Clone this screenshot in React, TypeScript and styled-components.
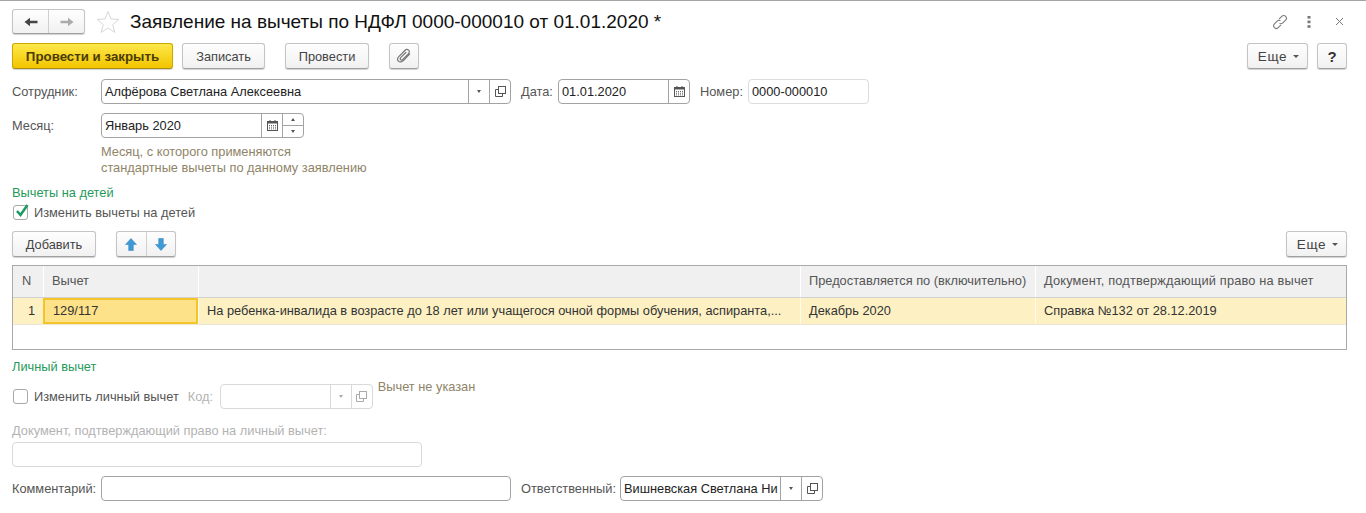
import { FC, ReactNode } from 'react';
import styled, { createGlobalStyle, css } from 'styled-components';

const Global = createGlobalStyle`
  html, body {
    margin: 0;
    padding: 0;
    background: #fff;
    overflow: hidden;
  }
  body {
    font-family: "Liberation Sans", Arial, sans-serif;
    font-size: 12.8px;
    color: #333;
  }
`;

const Page = styled.div`
  width: 1366px;
  height: 513px;
  box-sizing: border-box;
  border-top: 1px solid #a5a5a5;
  padding: 8px 19px 0 12px;
`;

const Row = styled.div<{ $h?: number; $mt?: number }>`
  display: flex;
  align-items: center;
  height: ${(p) => p.$h ?? 25}px;
  margin-top: ${(p) => p.$mt ?? 0}px;
`;

const Spacer = styled.div`
  flex: 1;
`;

const Title = styled.h1`
  margin: 0 0 0 10px;
  font-size: 19px;
  font-weight: normal;
  color: #111;
  white-space: nowrap;
`;

const StarSlot = styled.div`
  display: flex;
  margin-left: 11px;
`;

const WinIcons = styled.div`
  display: flex;
  align-items: center;
  margin-right: 3px;
`;

const DotsSlot = styled.div`
  display: flex;
  margin: 0 24px 0 19px;
`;

const buttonBase = css`
  box-sizing: border-box;
  height: 26px;
  border: 1px solid #c4c4c4;
  border-bottom-color: #9f9f9f;
  border-radius: 3px;
  background: linear-gradient(#fefefe, #f1f1f1);
  box-shadow: 0 1px 1px rgba(0, 0, 0, 0.18);
  display: inline-flex;
  align-items: center;
  justify-content: center;
  color: #444;
  font-family: inherit;
  font-size: 12.8px;
  padding: 0;
  flex: none;
`;

const Btn = styled.button<{ $w: number; $ml?: number }>`
  ${buttonBase};
  width: ${(p) => p.$w}px;
  margin-left: ${(p) => p.$ml ?? 0}px;
`;

const MoreBtn = styled(Btn)`
  font-size: 13.5px;
  letter-spacing: 0.6px;
  padding-left: 2px;
`;

const HelpBtn = styled(Btn)`
  font-size: 15px;
  font-weight: bold;
  color: #333;
`;

const PrimaryBtn = styled.button`
  ${buttonBase};
  width: 161px;
  border-color: #c9a800;
  border-bottom-color: #a88f10;
  background: linear-gradient(#fde84a, #f3c400);
  color: #4a3c00;
  font-size: 13.3px;
  font-weight: bold;
`;

const Caret = styled.span`
  display: inline-block;
  width: 0;
  height: 0;
  border-left: 3px solid transparent;
  border-right: 3px solid transparent;
  border-top: 3px solid #555;
  margin-left: 6px;
`;

const Group = styled.div<{ $w: number; $h?: number; $ml?: number }>`
  ${buttonBase};
  width: ${(p) => p.$w}px;
  height: ${(p) => p.$h ?? 26}px;
  margin-left: ${(p) => p.$ml ?? 0}px;
`;

const GroupCell = styled.div<{ $divider?: boolean }>`
  flex: 1;
  height: 100%;
  display: flex;
  align-items: center;
  justify-content: center;
  border-left: ${(p) => (p.$divider ? '1px solid #cfcfcf' : 'none')};
`;

const Label = styled.label<{ $w?: number; $ml?: number; $muted?: boolean }>`
  flex: none;
  width: ${(p) => (p.$w ? `${p.$w}px` : 'auto')};
  margin-left: ${(p) => p.$ml ?? 0}px;
  color: ${(p) => (p.$muted ? '#b3b3b3' : '#555')};
  white-space: nowrap;
`;

const Field = styled.div<{ $w: number; $disabled?: boolean; $soft?: boolean }>`
  box-sizing: border-box;
  flex: none;
  width: ${(p) => p.$w}px;
  height: 25px;
  display: flex;
  align-items: stretch;
  background: #fff;
  border: 1px solid ${(p) => (p.$disabled ? '#d9d9d9' : p.$soft ? '#dcdcdc' : '#a3a3a3')};
  border-radius: 4px;
  color: #222;
`;

const FieldText = styled.div`
  flex: 1;
  min-width: 0;
  padding-left: 3px;
  line-height: 23px;
  overflow: hidden;
  white-space: nowrap;
`;

const FieldBtn = styled.div<{ $disabled?: boolean }>`
  box-sizing: border-box;
  flex: none;
  width: 21px;
  display: flex;
  align-items: center;
  justify-content: center;
  border-left: 1px solid ${(p) => (p.$disabled ? '#d9d9d9' : '#a3a3a3')};
`;

const Spin = styled.div`
  box-sizing: border-box;
  flex: none;
  width: 21px;
  display: flex;
  flex-direction: column;
  border-left: 1px solid #a3a3a3;
`;

const SpinCell = styled.div<{ $bottom?: boolean }>`
  flex: 1;
  display: flex;
  align-items: center;
  justify-content: center;
  border-top: ${(p) => (p.$bottom ? '1px solid #a3a3a3' : 'none')};
`;

const Tri = styled.span<{ $up?: boolean; $muted?: boolean }>`
  width: 0;
  height: 0;
  border-left: 2.5px solid transparent;
  border-right: 2.5px solid transparent;
  ${(p) =>
    p.$up
      ? 'border-bottom: 3px solid #555;'
      : `border-top: 3px solid ${p.$muted ? '#aaa' : '#555'};`}
`;

const Hint = styled.div`
  margin: 6px 0 0 89px;
  color: #8f8468;
  line-height: 16px;
`;

const SectionTitle = styled.div<{ $mt: number }>`
  margin-top: ${(p) => p.$mt}px;
  color: #1f9a5a;
  line-height: 14px;
`;

const CheckRow = styled.label`
  display: flex;
  align-items: center;
  color: #555;
  white-space: nowrap;
  flex: none;
`;

const CheckBox = styled.span`
  box-sizing: border-box;
  position: relative;
  width: 15px;
  height: 15px;
  margin: 0 6px 0 1px;
  border: 1px solid #a8a8a8;
  border-radius: 3px;
  background: #fff;
  flex: none;
`;

const CheckMark = styled.svg`
  position: absolute;
  left: 0;
  top: -3px;
`;

const Table = styled.div`
  box-sizing: border-box;
  height: 85px;
  margin-top: 8px;
  border: 1px solid #a9a9a9;
  background: #fff;
`;

const columns = '30px 155px 602px 235px 1fr';

const HeadRow = styled.div`
  display: grid;
  grid-template-columns: ${columns};
  height: 32px;
  background: #f0f0f0;
  border-bottom: 1px solid #d2d2d2;
  box-sizing: border-box;
`;

const HeadCell = styled.div<{ $narrow?: boolean; $track?: boolean }>`
  padding-left: ${(p) => (p.$narrow ? 9 : 8)}px;
  line-height: 30px;
  color: #555;
  letter-spacing: ${(p) => (p.$track ? '0.17px' : 'normal')};
  border-left: 1px solid #fff;
  white-space: nowrap;
  overflow: hidden;
  &:first-child {
    border-left: none;
  }
`;

const BodyRow = styled.div`
  display: grid;
  grid-template-columns: ${columns};
  height: 27px;
  background: #fdf1c4;
  border-bottom: 1px solid #ece7d4;
  box-sizing: border-box;
`;

const Cell = styled.div<{ $active?: boolean; $right?: boolean }>`
  box-sizing: border-box;
  padding: ${(p) => (p.$right ? '0 8px 0 0' : '0 0 0 8px')};
  text-align: ${(p) => (p.$right ? 'right' : 'left')};
  line-height: ${(p) => (p.$active ? 22 : 26)}px;
  color: #333;
  white-space: nowrap;
  overflow: hidden;
  border-left: ${(p) => (p.$active ? 'none' : '1px solid #fffbe8')};
  ${(p) => p.$active && 'background: #fee28a; border: 2px solid #f4c52a;'}
  &:first-child {
    border-left: none;
  }
`;

const NotSet = styled.div`
  flex: none;
  align-self: flex-start;
  margin: -3px 0 0 5px;
  color: #8f8468;
  line-height: 12px;
`;

const MutedCaption = styled.div`
  margin-top: 15px;
  color: #b3b3b3;
  line-height: 14px;
`;

const ToolbarGap = styled.div`
  height: 11px;
`;

const ArrowIcon: FC<{ dir: 'left' | 'right'; color: string }> = ({ dir, color }) => (
  <svg width="14" height="10" viewBox="0 0 14 10">
    <path
      d={dir === 'left' ? 'M0.5 5 L6 0.8 V3.8 H13.5 V6.2 H6 V9.2 Z' : 'M13.5 5 L8 0.8 V3.8 H0.5 V6.2 H8 V9.2 Z'}
      fill={color}
    />
  </svg>
);

const BlueArrow: FC<{ up?: boolean }> = ({ up }) => (
  <svg width="12" height="13" viewBox="0 0 12 13">
    <path
      d={up ? 'M6 0.5 L11.5 6.5 H8.3 V12.5 H3.7 V6.5 H0.5 Z' : 'M6 12.5 L11.5 6.5 H8.3 V0.5 H3.7 V6.5 H0.5 Z'}
      fill="#3d9ad6"
      stroke="#2f7fb8"
      strokeWidth="0.5"
    />
  </svg>
);

const StarIcon = () => (
  <svg width="24" height="24" viewBox="0 0 24 24">
    <path
      d="M12 1.5 L14.9 9 L23 9.4 L16.7 14.5 L18.8 22.4 L12 18 L5.2 22.4 L7.3 14.5 L1 9.4 L9.1 9 Z"
      fill="#fff"
      stroke="#d8d8d8"
      strokeWidth="1"
    />
  </svg>
);

const ClipIcon = () => (
  <svg width="16" height="16" viewBox="0 0 16 16" fill="none" stroke="#777" strokeWidth="1.2" strokeLinecap="round">
    <path d="M13.6 6.2 L7.4 12.6 C5.8 14.2 3.5 14.2 2.4 13.1 C1.3 12 1.5 9.9 3 8.4 L8.9 2.5 C10 1.4 11.7 1.3 12.6 2.2 C13.5 3.1 13.4 4.7 12.3 5.8 L6.8 11.3 C6.1 12 5.1 12.1 4.6 11.6 C4.1 11.1 4.2 10.1 4.9 9.4 L9.8 4.5" />
  </svg>
);

const LinkIcon = () => (
  <svg width="16" height="16" viewBox="0 0 16 16" fill="none" stroke="#7c7c7c" strokeWidth="1.1">
    <path d="M7 5.2 L9.8 2.4 C10.9 1.3 12.6 1.3 13.6 2.3 C14.7 3.4 14.7 5 13.6 6.1 L10.8 8.9 C9.9 9.8 8.5 9.9 7.5 9.1" />
    <path d="M9 10.8 L6.2 13.6 C5.1 14.7 3.4 14.7 2.4 13.7 C1.3 12.6 1.3 11 2.4 9.9 L5.2 7.1 C6.1 6.2 7.5 6.1 8.5 6.9" />
  </svg>
);

const DotsIcon = () => (
  <svg width="4" height="12" viewBox="0 0 4 12" fill="#777">
    <rect x="0.5" y="0" width="3" height="2.6" />
    <rect x="0.5" y="4.6" width="3" height="2.6" />
    <rect x="0.5" y="9.2" width="3" height="2.6" />
  </svg>
);

const CloseIcon = () => (
  <svg width="9" height="9" viewBox="0 0 9 9" stroke="#777" strokeWidth="1" fill="none">
    <path d="M1 1 L8 8 M8 1 L1 8" />
  </svg>
);

const CalendarIcon = () => (
  <svg width="11" height="11" viewBox="0 0 11 11">
    <rect x="0.5" y="1.5" width="10" height="9" fill="#fff" stroke="#555" />
    <rect x="0.5" y="1.5" width="10" height="2" fill="#555" />
    <rect x="2.5" y="0" width="1" height="2" fill="#555" />
    <rect x="7.5" y="0" width="1" height="2" fill="#555" />
    <path d="M2 5.5 H9 M2 7.2 H9 M2 8.9 H9" stroke="#666" strokeDasharray="1 1" />
  </svg>
);

const OpenIcon: FC<{ color?: string }> = ({ color = '#555' }) => (
  <svg width="11" height="11" viewBox="0 0 11 11" fill="none" stroke={color}>
    <rect x="3.5" y="0.5" width="7" height="7" />
    <path d="M3.5 3.5 H0.5 V10.5 H7.5 V7.5" />
  </svg>
);

const Green = () => (
  <CheckMark width="17" height="16" viewBox="0 0 17 16">
    <path d="M3 8 L6.5 12 L13.5 2" fill="none" stroke="#1d9a63" strokeWidth="2.6" />
  </CheckMark>
);

const Picker: FC<{ w: number; children?: ReactNode; disabled?: boolean }> = ({ w, children, disabled }) => (
  <Field $w={w} $disabled={disabled}>
    <FieldText>{children}</FieldText>
    <FieldBtn $disabled={disabled}>
      <Tri $muted={disabled} />
    </FieldBtn>
    <FieldBtn $disabled={disabled}>
      <OpenIcon color={disabled ? '#aaa' : '#555'} />
    </FieldBtn>
  </Field>
);

export default function App() {
  return (
    <>
      <Global />
      <Page>
        <Row $h={25}>
          <Group $w={73} $h={25}>
            <GroupCell>
              <ArrowIcon dir="left" color="#444" />
            </GroupCell>
            <GroupCell $divider>
              <ArrowIcon dir="right" color="#aaa" />
            </GroupCell>
          </Group>
          <StarSlot>
            <StarIcon />
          </StarSlot>
          <Title>Заявление на вычеты по НДФЛ 0000-000010 от 01.01.2020 *</Title>
          <Spacer />
          <WinIcons>
            <LinkIcon />
            <DotsSlot>
              <DotsIcon />
            </DotsSlot>
            <CloseIcon />
          </WinIcons>
        </Row>

        <Row $h={26} $mt={9}>
          <PrimaryBtn>Провести и закрыть</PrimaryBtn>
          <Btn $w={83} $ml={9}>Записать</Btn>
          <Btn $w={84} $ml={20}>Провести</Btn>
          <Btn $w={30} $ml={20}>
            <ClipIcon />
          </Btn>
          <Spacer />
          <MoreBtn $w={61}>
            Еще
            <Caret />
          </MoreBtn>
          <HelpBtn $w={30} $ml={9}>?</HelpBtn>
        </Row>

        <Row $mt={10}>
          <Label $w={89}>Сотрудник:</Label>
          <Picker w={410}>Алфёрова Светлана Алексеевна</Picker>
          <Label $ml={10} $w={37}>Дата:</Label>
          <Field $w={132}>
            <FieldText>01.01.2020</FieldText>
            <FieldBtn>
              <CalendarIcon />
            </FieldBtn>
          </Field>
          <Label $ml={10} $w={48}>Номер:</Label>
          <Field $w={121} $soft>
            <FieldText>0000-000010</FieldText>
          </Field>
        </Row>

        <Row $mt={9}>
          <Label $w={89}>Месяц:</Label>
          <Field $w={203}>
            <FieldText>Январь 2020</FieldText>
            <FieldBtn>
              <CalendarIcon />
            </FieldBtn>
            <Spin>
              <SpinCell>
                <Tri $up />
              </SpinCell>
              <SpinCell $bottom>
                <Tri />
              </SpinCell>
            </Spin>
          </Field>
        </Row>

        <Hint>
          Месяц, с которого применяются
          <br />
          стандартные вычеты по данному заявлению
        </Hint>

        <SectionTitle $mt={10}>Вычеты на детей</SectionTitle>
        <Row $h={15} $mt={5}>
          <CheckRow>
            <CheckBox>
              <Green />
            </CheckBox>
            Изменить вычеты на детей
          </CheckRow>
        </Row>

        <ToolbarGap />
        <Row $h={26}>
          <Btn $w={84}>Добавить</Btn>
          <Group $w={60} $ml={20}>
            <GroupCell>
              <BlueArrow up />
            </GroupCell>
            <GroupCell $divider>
              <BlueArrow />
            </GroupCell>
          </Group>
          <Spacer />
          <MoreBtn $w={61}>
            Еще
            <Caret />
          </MoreBtn>
        </Row>

        <Table>
          <HeadRow>
            <HeadCell $narrow>N</HeadCell>
            <HeadCell>Вычет</HeadCell>
            <HeadCell />
            <HeadCell>Предоставляется по (включительно)</HeadCell>
            <HeadCell $track>Документ, подтверждающий право на вычет</HeadCell>
          </HeadRow>
          <BodyRow>
            <Cell $right>1</Cell>
            <Cell $active>129/117</Cell>
            <Cell>На ребенка-инвалида в возрасте до 18 лет или учащегося очной формы обучения, аспиранта,...</Cell>
            <Cell>Декабрь 2020</Cell>
            <Cell>Справка №132 от 28.12.2019</Cell>
          </BodyRow>
        </Table>

        <SectionTitle $mt={10}>Личный вычет</SectionTitle>
        <Row $mt={10}>
          <CheckRow>
            <CheckBox />
            Изменить личный вычет
          </CheckRow>
          <Label $ml={9} $w={32} $muted>Код:</Label>
          <Picker w={153} disabled />
          <NotSet>Вычет не указан</NotSet>
        </Row>

        <MutedCaption>Документ, подтверждающий право на личный вычет:</MutedCaption>
        <Row $mt={4}>
          <Field $w={410} $disabled />
        </Row>

        <Row $mt={9}>
          <Label $w={89}>Комментарий:</Label>
          <Field $w={410} />
          <Label $ml={10} $w={99}>Ответственный:</Label>
          <Picker w={203}>Вишневская Светлана Ни</Picker>
        </Row>
      </Page>
    </>
  );
}
